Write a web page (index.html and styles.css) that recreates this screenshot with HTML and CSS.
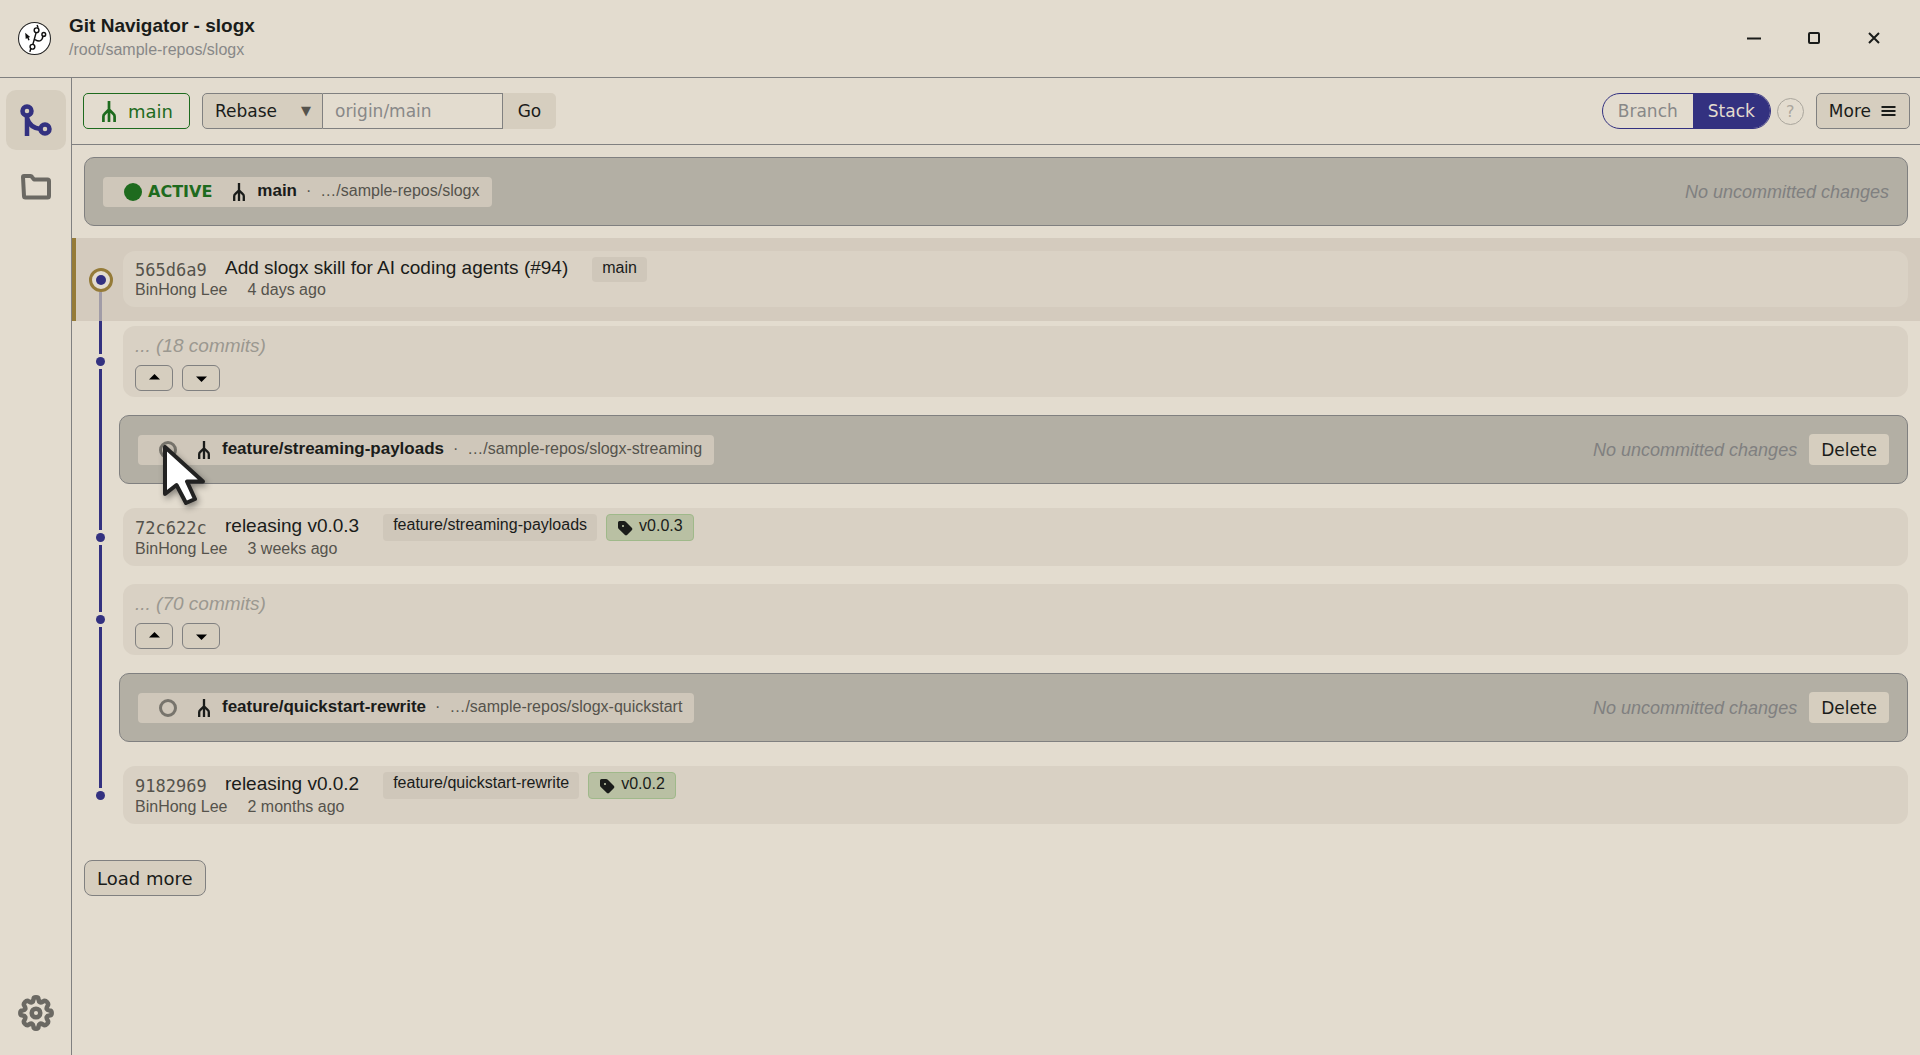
FILE: index.html
```html
<!DOCTYPE html>
<html lang="en">
<head>
  <meta charset="UTF-8" />
  <meta name="viewport" content="width=device-width, initial-scale=1.0"/>
  <title>Git Navigator - slogx</title>
  <link rel="stylesheet" href="styles.css">
</head>
<body>

  <!-- Shared icons -->
  <svg class="sprite" aria-hidden="true">
    <symbol id="icon-worktree" viewBox="0 0 14 21">
      <path d="M7 0V21M1.400 21V15.500Q1.400 14 2.500 13L6.500 9M12.600 21V15.500Q12.600 14 11.500 13L7.500 9" fill="none" stroke="currentColor" stroke-width="2.700"/>
    </symbol>
    <symbol id="icon-tag" viewBox="0 0 16 16">
      <path fill-rule="evenodd" fill="currentColor" d="M1 2.500Q1 1 2.500 1H7Q8 1 8.800 1.800L15 8Q15.800 9 15 10L10 15Q9 15.800 8 15L1.800 9Q1 8.200 1 7.200ZM6 4.900A1.100 1.100 0 1 0 6 7.100A1.100 1.100 0 1 0 6 4.900Z"/>
    </symbol>
  </svg>

  <!-- Title bar -->
  <header class="titlebar">
    <svg class="logo" viewBox="0 0 32 32" aria-hidden="true">
      <circle cx="16" cy="16" r="15.500" fill="#fff" stroke="#222" stroke-width="1"/>
      <g fill="none" stroke="#111" stroke-width="1.400">
        <path d="M17.500 10.500L14.500 21.500M16.500 17Q23 21 24.300 13.500M19.500 5.500L18.500 3M12.500 25.500L11.500 29"/>
        <circle cx="18" cy="8" r="2.300"/>
        <circle cx="25" cy="12" r="1.800"/>
        <circle cx="14" cy="24" r="2.300"/>
      </g>
      <path d="M7 10.500L11.800 14.500L10.300 15L11.300 17.500L10 18L9 15.500L7.500 16.500Z" fill="#111"/>
    </svg>
    <div class="titles">
      <h1>Git Navigator - slogx</h1>
      <p>/root/sample-repos/slogx</p>
    </div>
    <div class="window-buttons">
      <button aria-label="Minimize"><svg viewBox="0 0 16 16"><path d="M1 8.500H15"/></svg></button>
      <button aria-label="Maximize"><svg viewBox="0 0 16 16"><rect x="3" y="3" width="10" height="10" rx="1"/></svg></button>
      <button aria-label="Close"><svg viewBox="0 0 16 16"><path d="M3 3L13 13M13 3L3 13"/></svg></button>
    </div>
  </header>

  <div class="app">
    <!-- Sidebar -->
    <nav class="sidebar">
      <button class="side-btn active" aria-label="Commit graph">
        <svg viewBox="0 0 32 32" fill="none" stroke="currentColor" stroke-width="4.500">
          <circle cx="7" cy="7" r="4.500"/>
          <circle cx="25" cy="25" r="4.500"/>
          <path d="M7 11V32M7 14Q10 24 20.500 25"/>
        </svg>
      </button>
      <button class="side-btn" aria-label="Files">
        <svg viewBox="0 0 32 32" fill="none" stroke="currentColor" stroke-width="4" stroke-linejoin="round">
          <path d="M3 6Q3 5 4 5H10.500Q11.500 5 12 6L14 8.500H27.500Q29 8.500 29 10V25Q29 26.500 27.500 26.500H5.500Q4 26.500 4 25Z"/>
        </svg>
      </button>
      <button class="side-btn settings" aria-label="Settings">
        <svg viewBox="0 0 36 36" fill="none" stroke="currentColor" stroke-width="4.500" stroke-linejoin="round">
          <path d="M15.500 4.500Q15.500 2.300 18 2.300T20.500 4.500Q21 9 25 6.500Q27 4.900 29 7T29.500 11Q27 15 31.500 15.500Q33.700 15.500 33.700 18T31.500 20.500Q27 21 29.500 25Q31 27 29 29T25 29.500Q21 27 20.500 31.500Q20.500 33.700 18 33.700T15.500 31.500Q15 27 11 29.500Q9 31 7 29T6.500 25Q9 21 4.500 20.500Q2.300 20.500 2.300 18T4.500 15.500Q9 15 6.500 11Q5 9 7 7T11 6.500Q15 9 15.500 4.500Z"/>
          <circle cx="18" cy="18" r="4.300"/>
        </svg>
      </button>
    </nav>

    <main class="main">
      <!-- Toolbar -->
      <div class="toolbar">
        <button class="btn branch-btn"><svg class="fork"><use href="#icon-worktree"/></svg>main</button>
        <form class="rebase">
          <div class="select-wrap">
            <select aria-label="Action"><option>Rebase</option><option>Merge</option></select>
          </div>
          <input type="text" placeholder="origin/main" aria-label="Target branch">
          <button type="button" class="go">Go</button>
        </form>
        <div class="toolbar-right">
          <div class="toggle">
            <button>Branch</button>
            <button class="on">Stack</button>
          </div>
          <button class="help" aria-label="Help">?</button>
          <button class="btn more">More
            <svg viewBox="0 0 16 12" aria-hidden="true"><path d="M1 2H15M1 6H15M1 10H15"/></svg>
          </button>
        </div>
      </div>

      <!-- Active worktree -->
      <section class="worktree current">
        <div class="chip">
          <span class="active-dot"></span>
          <span class="active-label">ACTIVE</span>
          <svg class="fork"><use href="#icon-worktree"/></svg>
          <strong>main</strong><span class="sep">·</span><span class="path">…/sample-repos/slogx</span>
        </div>
        <em class="clean">No uncommitted changes</em>
      </section>

      <!-- Commit graph -->
      <div class="graph">
        <div class="row selected">
          <div class="rail first"><span class="ring"><span class="dot"></span></span></div>
          <article class="card">
            <div class="line">
              <code>565d6a9</code><span class="subject">Add slogx skill for AI coding agents (#94)</span>
              <span class="label">main</span>
            </div>
            <div class="meta"><span>BinHong Lee</span><span>4 days ago</span></div>
          </article>
        </div>

        <div class="row">
          <div class="rail"><span class="dot"></span></div>
          <div class="card hidden-commits">
            <em>... (18 commits)</em>
            <div class="expand">
              <button aria-label="Expand up"><svg viewBox="0 0 11 8"><path d="M0 5.500L5.500 0L11 5.500Z"/></svg></button>
              <button aria-label="Expand down"><svg viewBox="0 0 11 8"><path d="M0 2.500L5.500 8L11 2.500Z"/></svg></button>
            </div>
          </div>
        </div>

        <div class="row worktree-row">
          <div class="rail"></div>
          <section class="worktree">
            <div class="chip">
              <button class="switch" aria-label="Switch to feature/streaming-payloads">
                <svg class="pointer" viewBox="0 0 48 66" aria-hidden="true">
                  <path d="M5 4V51L16.500 42L26 60L35 56L27 38.500H43Z" fill="#fff" stroke="#222" stroke-width="4" stroke-linejoin="round"/>
                </svg>
              </button>
              <svg class="fork"><use href="#icon-worktree"/></svg>
              <strong>feature/streaming-payloads</strong><span class="sep">·</span><span class="path">…/sample-repos/slogx-streaming</span>
            </div>
            <em class="clean">No uncommitted changes</em>
            <button class="delete">Delete</button>
          </section>
        </div>

        <div class="row">
          <div class="rail"><span class="dot"></span></div>
          <article class="card">
            <div class="line">
              <code>72c622c</code><span class="subject">releasing v0.0.3</span>
              <span class="label">feature/streaming-payloads</span>
              <span class="label tag"><svg><use href="#icon-tag"/></svg>v0.0.3</span>
            </div>
            <div class="meta"><span>BinHong Lee</span><span>3 weeks ago</span></div>
          </article>
        </div>

        <div class="row">
          <div class="rail"><span class="dot"></span></div>
          <div class="card hidden-commits">
            <em>... (70 commits)</em>
            <div class="expand">
              <button aria-label="Expand up"><svg viewBox="0 0 11 8"><path d="M0 5.500L5.500 0L11 5.500Z"/></svg></button>
              <button aria-label="Expand down"><svg viewBox="0 0 11 8"><path d="M0 2.500L5.500 8L11 2.500Z"/></svg></button>
            </div>
          </div>
        </div>

        <div class="row worktree-row">
          <div class="rail"></div>
          <section class="worktree">
            <div class="chip">
              <button class="switch" aria-label="Switch to feature/quickstart-rewrite"></button>
              <svg class="fork"><use href="#icon-worktree"/></svg>
              <strong>feature/quickstart-rewrite</strong><span class="sep">·</span><span class="path">…/sample-repos/slogx-quickstart</span>
            </div>
            <em class="clean">No uncommitted changes</em>
            <button class="delete">Delete</button>
          </section>
        </div>

        <div class="row">
          <div class="rail last"><span class="dot"></span></div>
          <article class="card">
            <div class="line">
              <code>9182969</code><span class="subject">releasing v0.0.2</span>
              <span class="label">feature/quickstart-rewrite</span>
              <span class="label tag"><svg><use href="#icon-tag"/></svg>v0.0.2</span>
            </div>
            <div class="meta"><span>BinHong Lee</span><span>2 months ago</span></div>
          </article>
        </div>
      </div>

      <button class="btn load-more">Load more</button>
    </main>
  </div>

</body>
</html>
```
FILE: styles.css
```css
/* Basic reset */
* {
  margin: 0;
  padding: 0;
  box-sizing: border-box;
}

:root {
  --bg: #e3dccf;
  --card: #d9d1c4;
  --chip: #cfc7ba;
  --button: #d6cebf;
  --line: #808080;
  --text: #1a1c1a;
  --muted: #888888;
  --blue: #333180;
  --green: #1e6b1e;
}

body {
  display: flex;
  flex-direction: column;
  min-height: 100vh;
  background: var(--bg);
  color: var(--text);
  font-family: "Liberation Sans", Arial, sans-serif;
  font-size: 16px;
  line-height: 20px;
}

button,
input,
select {
  font-family: "DejaVu Sans", sans-serif;
  font-size: 17px;
  color: inherit;
  background: none;
  border: none;
}

button {
  cursor: pointer;
}

.sprite {
  display: none;
}

/* Title bar */
.titlebar {
  display: flex;
  align-items: center;
  height: 78px;
  padding: 0 16px 0 18px;
  border-bottom: 1px solid var(--line);
}

.logo {
  width: 33px;
  height: 33px;
  margin-right: 18px;
}

.titles {
  flex: 1;
  padding-bottom: 4px;
}

.titles h1 {
  font-size: 19px;
  line-height: 26px;
}

.titles p {
  line-height: 22px;
  color: var(--muted);
}

.window-buttons {
  display: flex;
  padding-top: 2px;
}

.window-buttons button {
  width: 60px;
  height: 40px;
}

.window-buttons svg {
  width: 16px;
  height: 16px;
  fill: none;
  stroke: currentColor;
  stroke-width: 2;
}

.app {
  flex: 1;
  display: flex;
}

/* Sidebar */
.sidebar {
  display: flex;
  flex-direction: column;
  gap: 7px;
  width: 72px;
  padding: 12px 5px 12px 6px;
  border-right: 1px solid var(--line);
}

.side-btn {
  display: grid;
  place-items: center;
  width: 60px;
  height: 60px;
  border-radius: 10px;
  color: #6b6963;
}

.side-btn svg {
  width: 32px;
  height: 32px;
}

.side-btn.active {
  background: #d6cebf;
  color: var(--blue);
}

.side-btn.settings {
  margin-top: auto;
}

.side-btn.settings svg {
  width: 36px;
  height: 36px;
}

/* Toolbar */
.main {
  flex: 1;
  min-width: 0;
}

.toolbar {
  display: flex;
  align-items: center;
  gap: 12px;
  height: 67px;
  padding: 0 10px 0 11px;
  border-bottom: 1px solid var(--line);
}

.btn {
  display: flex;
  align-items: center;
  height: 36px;
  padding: 0 12px;
  border: 1px solid var(--line);
  border-radius: 5px;
  background: var(--button);
}

.branch-btn {
  gap: 12px;
  padding: 0 16px 0 18px;
  border-color: var(--green);
  background: none;
  color: var(--green);
  font-size: 18px;
}

.fork {
  width: 14px;
  height: 21px;
}

.rebase {
  display: flex;
  height: 36px;
}

.select-wrap {
  position: relative;
}

.select-wrap::after {
  content: "▼";
  position: absolute;
  top: 8px;
  right: 12px;
  font-family: "DejaVu Sans", sans-serif;
  font-size: 13px;
  color: #55534c;
  pointer-events: none;
}

.rebase select {
  appearance: none;
  width: 121px;
  height: 36px;
  padding-left: 12px;
  border: 1px solid var(--line);
  border-radius: 5px 0 0 5px;
  background: var(--button);
}

.rebase input {
  width: 180px;
  padding: 0 12px;
  border: 1px solid var(--line);
  border-left: none;
}

.rebase input::placeholder {
  color: var(--muted);
  opacity: 1;
}

.go {
  width: 53px;
  border-radius: 0 5px 5px 0;
  background: var(--button);
}

.toolbar-right {
  display: flex;
  align-items: center;
  margin-left: auto;
}

.toggle {
  display: flex;
  height: 36px;
  border: 1px solid var(--blue);
  border-radius: 18px;
  overflow: hidden;
}

.toggle button {
  padding: 0 15px;
  color: var(--muted);
}

.toggle .on {
  background: var(--blue);
  color: var(--bg);
}

.help {
  width: 27px;
  height: 27px;
  margin: 0 12px 0 6px;
  border: 1px solid #aaa69d;
  border-radius: 50%;
  color: #aaa69d;
  font-size: 16px;
}

.more {
  gap: 9px;
}

.more svg {
  width: 17px;
  height: 12px;
  stroke: currentColor;
  stroke-width: 2;
}

/* Worktree bars */
.worktree {
  display: flex;
  align-items: center;
  gap: 12px;
  height: 69px;
  padding: 0 18px;
  border: 1px solid var(--line);
  border-radius: 10px;
  background: #b3afa4;
}

.worktree.current {
  margin: 12px;
}

.chip {
  display: flex;
  align-items: center;
  height: 30px;
  padding: 0 12px 0 21px;
  border-radius: 4px;
  background: var(--chip);
}

.chip .fork {
  width: 12px;
  height: 18px;
  margin: 0 12px 0 21px;
}

.chip strong,
.path,
.sep {
  padding-bottom: 2px;
}

.chip strong {
  font-size: 17px;
}

.active-dot {
  width: 18px;
  height: 18px;
  margin-right: 6px;
  border-radius: 50%;
  background: var(--green);
}

.active-label {
  font-family: "DejaVu Sans", sans-serif;
  font-size: 16px;
  font-weight: bold;
  color: var(--green);
}

.sep {
  margin: 0 9px;
}

.path,
.sep {
  color: #55534c;
}

.clean {
  margin-left: auto;
  font-size: 18px;
  color: var(--line);
}

.switch {
  position: relative;
  width: 18px;
  height: 18px;
  border: 3px solid #77746c;
  border-radius: 50%;
}

/* Pointer resting on the hovered switch */
.pointer {
  position: absolute;
  top: -1px;
  left: -2px;
  z-index: 2;
  width: 48px;
  height: 66px;
  filter: drop-shadow(2px 3px 3px rgba(0, 0, 0, 0.4));
}

.delete {
  height: 31px;
  padding: 0 12px;
  border-radius: 4px;
  background: var(--button);
}

/* Commit graph */
.row {
  display: flex;
  padding: 0 12px;
}

.rail {
  display: flex;
  flex-direction: column;
  align-items: center;
  width: 33px;
}

.rail::before,
.rail::after {
  content: "";
  flex: 1;
  width: 3px;
  background: var(--blue);
}

.rail.first::before,
.rail.last::after {
  visibility: hidden;
}

.dot {
  width: 9px;
  height: 9px;
  margin: 3px 0;
  border-radius: 50%;
  background: var(--blue);
}

.ring {
  display: grid;
  place-items: center;
  width: 24px;
  height: 24px;
  border: 3px solid #957b38;
  border-radius: 50%;
  background: var(--bg);
}

.ring .dot {
  width: 10px;
  height: 10px;
  margin: 0;
}

.card {
  flex: 1;
  margin: 9px 0 9px 6px;
  padding: 6px 12px 9px;
  border-radius: 12px;
  background: var(--card);
}

.selected {
  position: relative;
  z-index: 1;
  margin-bottom: -4px;
  background: #d4cbbe;
  box-shadow: inset 4px 0 #957b38;
}

.selected .rail::after {
  background: #a19ca7;
}

.selected .card {
  margin-top: 13px;
  margin-bottom: 14px;
  background: #dad2c5;
}

.worktree-row .worktree {
  flex: 1;
  margin: 9px 0 15px 2px;
}

.line {
  display: flex;
  align-items: center;
}

.line code {
  width: 90px;
  font-family: "DejaVu Sans Mono", monospace;
  font-size: 17px;
  color: #55534c;
}

.subject {
  padding-bottom: 4px;
  margin-right: 24px;
  font-size: 19px;
}

.label {
  align-self: stretch;
  padding: 0 10px 4px;
  border-radius: 4px;
  background: var(--chip);
  line-height: 21px;
}

.tag {
  display: flex;
  gap: 6px;
  margin-left: 9px;
  border: 1px solid #9fb98a;
  background: #b9c0a3;
}

.tag svg {
  width: 16px;
  height: 16px;
  margin-top: 5px;
}

.meta {
  display: flex;
  gap: 20px;
  line-height: 16px;
  color: #55534c;
}

.hidden-commits em {
  display: block;
  line-height: 28px;
  font-size: 19px;
  color: #9b9890;
}

.hidden-commits {
  padding-bottom: 6px;
}

.expand {
  display: flex;
  gap: 9px;
  margin-top: 5px;
}

.expand button {
  display: grid;
  place-items: center;
  width: 38px;
  height: 26px;
  border: 1px solid var(--line);
  border-radius: 6px;
  background: var(--button);
}

.expand svg {
  width: 11px;
  height: 8px;
}

.load-more {
  margin: 27px 12px;
  border-radius: 8px;
  font-size: 18px;
}
```
